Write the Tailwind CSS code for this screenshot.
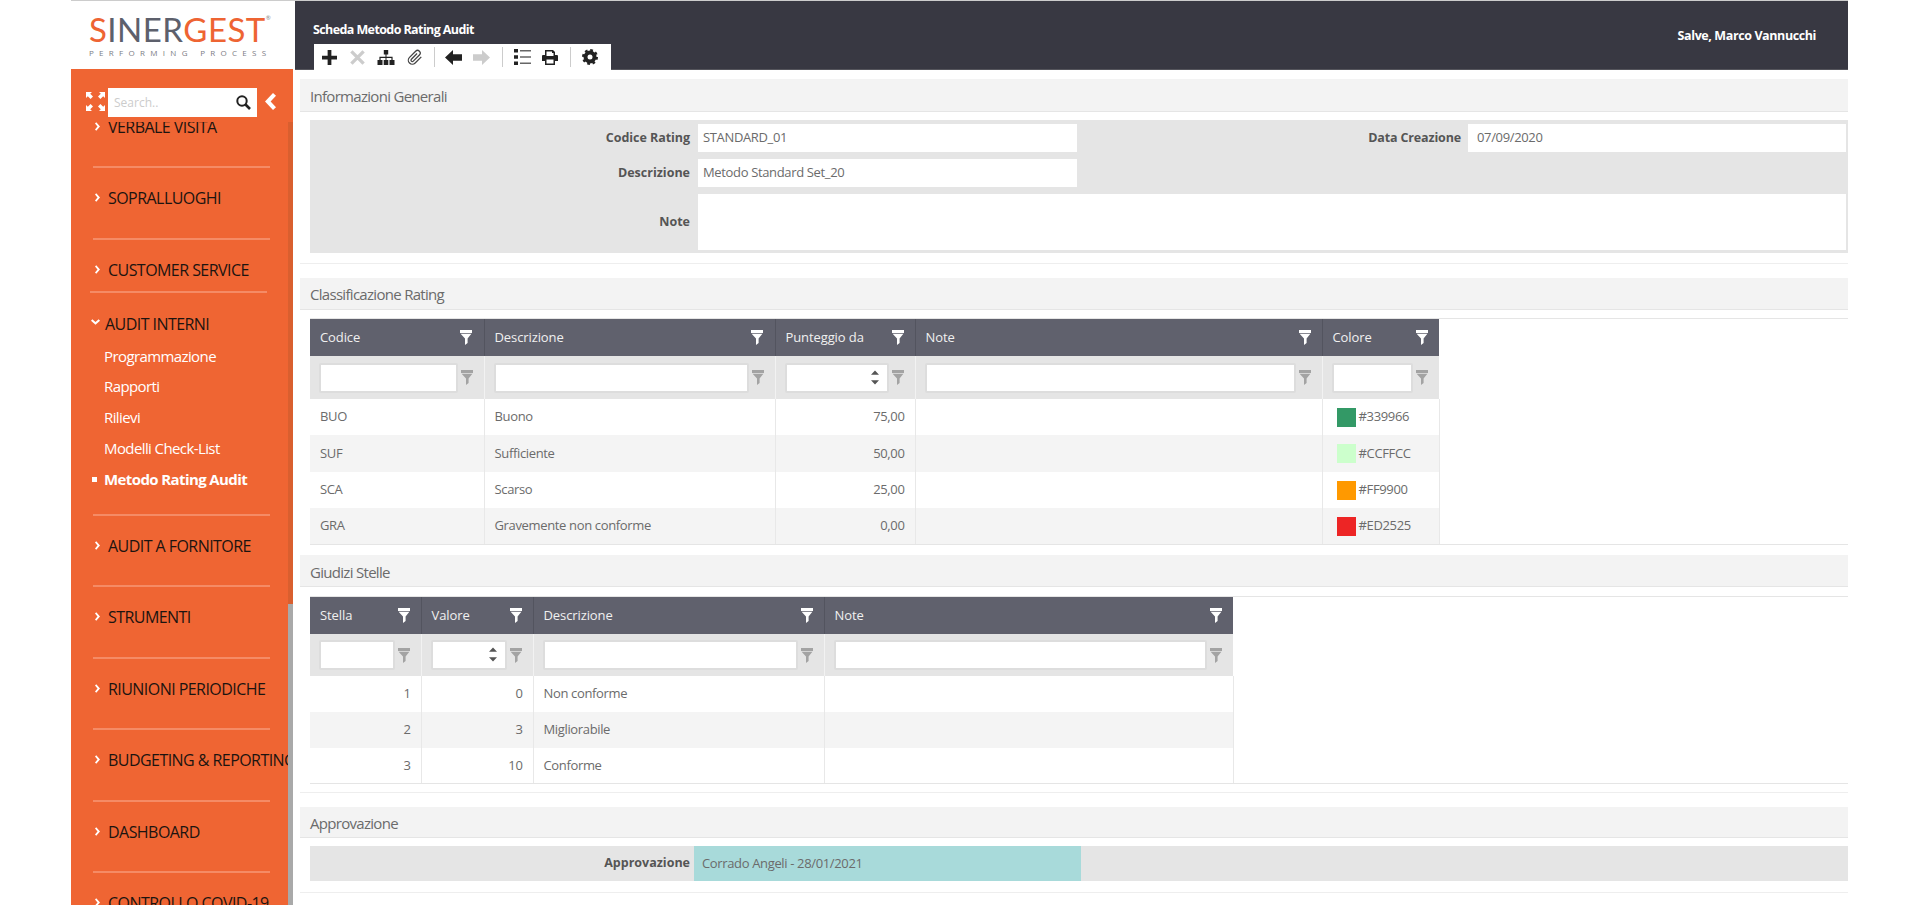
<!DOCTYPE html>
<html lang="it">
<head>
  <meta charset="UTF-8">
  <title>Scheda Metodo Rating Audit</title>
  <script src="https://cdn.jsdelivr.net/npm/@tailwindcss/browser@4"></script>
</head>
<body class="bg-white font-['Open_Sans',sans-serif] text-[#6b6b6b] h-[905px] overflow-hidden">
  <!-- shared icons -->
  <svg class="hidden">
    <symbol id="funnel" viewBox="0 0 12 15"><path d="M0 0h12v3H0zM.6 3.800h10.800L7.600 8.400V13L5 15V8.400z"/></symbol>
    <symbol id="chev" viewBox="0 0 6 10"><path d="M1.500 0 6 5l-4.500 5L0 8.500 3 5 0 1.500z"/></symbol>
    <symbol id="spin" viewBox="0 0 9 16"><path d="M4.500 0 9 5H0zM0 11h9l-4.500 5z"/></symbol>
  </svg>

  <div class="ml-[71px] w-[1777px] h-[905px] flex border-t border-[#ccc]">
    <!-- sidebar -->
    <aside class="w-[224px] shrink-0 flex flex-col">
      <div class="h-[68px] shrink-0 pl-[18px] pt-[10px] bg-white">
        <div class="flex items-start text-[33px] leading-[37px] font-['Lato',sans-serif] tracking-[0.45px] text-[#ee6433]"><span>S</span><span class="text-[#5d606c]">INER</span><span>GEST</span><span class="text-[6px] leading-[14px] text-[#888]">®</span></div>
        <div class="text-[8px] leading-[10px] tracking-[5.300px] text-[#7d7d85] whitespace-nowrap">PERFORMING PROCESS</div>
      </div>
      <div class="w-[222px] flex-1 min-h-0 bg-[#ef6533] flex flex-col">
        <div class="h-[53px] shrink-0 flex items-start pt-[19px] pl-[15px]">
          <svg class="w-[19px] h-[19px] mt-[4px] text-white" viewBox="0 0 19 19" fill="currentColor"><path d="M0 0h6L4.200 1.800 7 4.600 4.600 7 1.800 4.200 0 6zM19 0v6l-1.800-1.800L14.400 7 12 4.600l2.800-2.800L13 0zM0 19v-6l1.800 1.800L4.600 12 7 14.400l-2.800 2.800L6 19zM19 19h-6l1.800-1.800L12 14.400l2.400-2.400 2.800 2.800L19 13z"/></svg>
          <div class="w-[149px] h-[29px] ml-[3px] bg-white flex items-center justify-between pl-[6px] pr-[6px]">
            <span class="text-[12px] text-[#ccc]">Search..</span>
            <svg class="w-[15px] h-[15px] text-[#222]" viewBox="0 0 15 15" fill="none" stroke="currentColor"><circle cx="6" cy="6" r="4.700" stroke-width="2"/><path d="M9.500 9.500 14 14" stroke-width="2.600"/></svg>
          </div>
          <svg class="w-[11px] h-[17px] ml-[8px] mt-[5px] text-white" viewBox="0 0 11 17" fill="currentColor"><path d="M8 0l3 2.800L5.600 8.500 11 14.200 8 17 0 8.500z"/></svg>
        </div>
        <div class="flex-1 min-h-0 flex">
          <nav class="w-[217px] overflow-hidden text-[16px] tracking-[-0.55px] leading-[20px] text-[#1c1410] whitespace-nowrap">
            <div class="-mt-[25.500px]">
              <a class="ml-[22px] w-[177px] h-[71.500px] pt-[20px] flex border-b-2 border-[#f58b65]"><svg class="w-[5px] h-[9px] shrink-0 mt-[5px] ml-[2px] mr-[8px] fill-white"><use href="#chev"/></svg>VERBALE VISITA</a>
              <a class="ml-[22px] w-[177px] h-[71.500px] pt-[20px] flex border-b-2 border-[#f58b65]"><svg class="w-[5px] h-[9px] shrink-0 mt-[5px] ml-[2px] mr-[8px] fill-white"><use href="#chev"/></svg>SOPRALLUOGHI</a>
              <a class="ml-[19px] w-[177px] h-[53px] pt-[20px] pl-[3px] flex border-b-2 border-[#f58b65]"><svg class="w-[5px] h-[9px] shrink-0 mt-[5px] ml-[2px] mr-[8px] fill-white"><use href="#chev"/></svg>CUSTOMER SERVICE</a>
              <div class="ml-[22px] w-[177px] h-[223px] pt-[21px] border-b-2 border-[#f58b65]">
                <a class="flex"><svg class="w-[9px] h-[6px] shrink-0 mt-[5px] -ml-[2px] mr-[5px] fill-white" viewBox="0 0 10 6"><path d="M0 1.500 1.500 0 5 3l3.500-3L10 1.500 5 6z"/></svg>AUDIT INTERNI</a>
                <div class="mt-[12px] pl-[11px] text-[15px] tracking-[-0.6px] text-white flex flex-col gap-[10.800px]">
                  <a>Programmazione</a>
                  <a>Rapporti</a>
                  <a>Rilievi</a>
                  <a>Modelli Check-List</a>
                  <a class="relative font-bold"><span class="absolute -left-[12px] top-[8px] w-[5px] h-[5px] bg-white"></span>Metodo Rating Audit</a>
                </div>
              </div>
              <a class="ml-[22px] w-[177px] h-[71.500px] pt-[20px] flex border-b-2 border-[#f58b65]"><svg class="w-[5px] h-[9px] shrink-0 mt-[5px] ml-[2px] mr-[8px] fill-white"><use href="#chev"/></svg>AUDIT A FORNITORE</a>
              <a class="ml-[22px] w-[177px] h-[71.500px] pt-[20px] flex border-b-2 border-[#f58b65]"><svg class="w-[5px] h-[9px] shrink-0 mt-[5px] ml-[2px] mr-[8px] fill-white"><use href="#chev"/></svg>STRUMENTI</a>
              <a class="ml-[22px] w-[177px] h-[71.500px] pt-[20px] flex border-b-2 border-[#f58b65]"><svg class="w-[5px] h-[9px] shrink-0 mt-[5px] ml-[2px] mr-[8px] fill-white"><use href="#chev"/></svg>RIUNIONI PERIODICHE</a>
              <a class="ml-[22px] w-[177px] h-[71.500px] pt-[20px] flex border-b-2 border-[#f58b65]"><svg class="w-[5px] h-[9px] shrink-0 mt-[5px] ml-[2px] mr-[8px] fill-white"><use href="#chev"/></svg>BUDGETING &amp; REPORTING</a>
              <a class="ml-[22px] w-[177px] h-[71.500px] pt-[20px] flex border-b-2 border-[#f58b65]"><svg class="w-[5px] h-[9px] shrink-0 mt-[5px] ml-[2px] mr-[8px] fill-white"><use href="#chev"/></svg>DASHBOARD</a>
              <a class="ml-[22px] w-[177px] h-[71.500px] pt-[20px] flex"><svg class="w-[5px] h-[9px] shrink-0 mt-[5px] ml-[2px] mr-[8px] fill-white"><use href="#chev"/></svg>CONTROLLO COVID-19</a>
            </div>
          </nav>
          <div class="w-[5px] flex flex-col">
            <div class="h-[482px] bg-[#d95f2f]"></div>
            <div class="flex-1 bg-[#a9a9a9]"></div>
          </div>
        </div>
      </div>
    </aside>

    <div class="flex-1 min-w-0 flex flex-col">
      <!-- top bar -->
      <header class="h-[69px] shrink-0 bg-[#383842] border-b border-[#55555c] relative text-white font-bold">
        <div class="pl-[18px] pt-[20px] text-[12.500px] tracking-[-0.6px] leading-[17px]">Scheda Metodo Rating Audit</div>
        <div class="absolute right-[32px] top-[26px] text-[12.500px] tracking-[-0.4px] leading-[17px]">Salve, Marco Vannucchi</div>
        <div class="ml-[19px] mt-[6px] w-[297px] h-[26px] bg-white flex items-center pl-[8px] relative z-10">
          <svg class="w-[15px] h-[15px] fill-[#222]" viewBox="0 0 16 16"><path d="M6 0h4v6h6v4h-6v6H6v-6H0V6h6z"/></svg>
          <svg class="w-[15px] h-[15px] ml-[13px] stroke-[#ccc]" viewBox="0 0 16 16" stroke-width="3.600"><path d="M1.500 1.500l13 13M14.500 1.500l-13 13"/></svg>
          <svg class="w-[18px] h-[15px] ml-[12px] fill-[#222]" viewBox="0 0 18 15"><path d="M6.800 0h4.400v4.400H9.500V6.800H15.600V10H17.500V15H12.500V10H14.400V8H9.500V10H11.300V15H6.700V10H8.500V8H3.600V10H5.500V15H.5V10H2.400V6.800H8.500V4.400H6.800z"/></svg>
          <svg class="w-[16px] h-[17px] ml-[12px] stroke-[#444]" viewBox="0 0 24 24" fill="none" stroke-width="1.900"><path d="M21.440 11.050l-9.190 9.190a6 6 0 0 1-8.490-8.490l9.190-9.190a4 4 0 0 1 5.660 5.660l-9.200 9.190a2 2 0 0 1-2.830-2.830l8.490-8.480"/></svg>
          <span class="w-px h-[20px] bg-[#ccc] ml-[11px]"></span>
          <svg class="w-[17px] h-[15px] ml-[10px] fill-[#222]" viewBox="0 0 17 15"><path d="M0 7.500 8 0v4.300h9v6.400H8V15z"/></svg>
          <svg class="w-[17px] h-[15px] ml-[11px] fill-[#ccc]" viewBox="0 0 17 15"><path d="M17 7.500 9 0v4.300H0v6.400h9V15z"/></svg>
          <span class="w-px h-[20px] bg-[#ccc] ml-[12px]"></span>
          <svg class="w-[17px] h-[16px] ml-[11px]" viewBox="0 0 17 16"><path fill="#222" d="M0 0h4v3.500H0zM0 6.200h4v3.500H0zM0 12.500h4V16H0z"/><path fill="#666" d="M6 1h11v1.400H6zM6 7.300h11v1.400H6zM6 13.600h11V15H6z"/></svg>
          <svg class="w-[16px] h-[15px] ml-[11px] fill-[#222]" viewBox="0 0 16 15" fill-rule="evenodd"><path d="M3 0h8l2 2v3h2a1 1 0 0 1 1 1v5h-3v4H3v-4H0V6a1 1 0 0 1 1-1h2zm1.500 1.500V6h7V3H10V1.500zM4.500 9.500v4h7v-4z"/></svg>
          <span class="w-px h-[20px] bg-[#ccc] ml-[12px]"></span>
          <svg class="w-[16px] h-[16px] ml-[11px]" viewBox="0 0 16 16"><circle cx="8" cy="8" r="6.500" fill="#222"/><circle cx="8" cy="8" r="6.800" fill="none" stroke="#222" stroke-width="2.400" stroke-dasharray="2.700 2.640"/><circle cx="8" cy="8" r="2.500" fill="#fff"/></svg>
        </div>
      </header>

      <main class="flex-1 min-h-0 pt-[9px] pl-[5px] text-[13px] tracking-[-0.35px]">
        <!-- informazioni generali -->
        <section class="h-[185px] border-b border-[#eee]">
          <h2 class="h-[33px] pl-[10px] bg-[#f3f3f3] border-b border-[#e5e5e5] text-[15px] tracking-[-0.7px] leading-[35px]">Informazioni Generali</h2>
          <div class="ml-[10px] mt-[8px] h-[133px] bg-[#e5e5e5] pt-[4px] pr-[2px] flex flex-col">
            <div class="flex h-[28px] items-center">
              <label class="w-[388px] pr-[8px] text-right font-bold text-[#555] text-[12.500px] tracking-[-0.05px]">Codice Rating</label>
              <div class="w-[379px] h-full bg-white pl-[5px] leading-[26px]">STANDARD_01</div>
              <label class="w-[391px] pr-[7px] text-right font-bold text-[#555] text-[12.500px] tracking-[-0.15px]">Data Creazione</label>
              <div class="flex-1 h-full bg-white pl-[9px] leading-[26px]">07/09/2020</div>
            </div>
            <div class="flex h-[28px] items-center mt-[7px]">
              <label class="w-[388px] pr-[8px] text-right font-bold text-[#555] text-[12.500px] tracking-normal">Descrizione</label>
              <div class="w-[379px] h-full bg-white pl-[5px] leading-[26px]">Metodo Standard Set_20</div>
            </div>
            <div class="flex h-[56px] items-center mt-[7px]">
              <label class="w-[388px] pr-[8px] text-right font-bold text-[#555] text-[12.500px] tracking-normal">Note</label>
              <div class="flex-1 h-full bg-white"></div>
            </div>
          </div>
        </section>

        <!-- classificazione rating -->
        <section class="mt-[14px] h-[277px]">
          <h2 class="h-[32px] pl-[10px] bg-[#f3f3f3] border-b border-[#e5e5e5] text-[15px] tracking-[-0.7px] leading-[33px]">Classificazione Rating</h2>
          <div class="ml-[10px] mt-[8px] border-y border-[#e5e5e5]">
            <table class="table-fixed w-[1129px] border-collapse">
              <colgroup><col class="w-[174px]"><col class="w-[291px]"><col class="w-[140px]"><col class="w-[407px]"><col class="w-[117px]"></colgroup>
              <thead>
                <tr class="h-[37px] bg-[#60616d] text-[#f0f0f0] tracking-[-0.1px]">
                  <th class="px-[10px] font-normal text-left border-r border-[#53545f]"><div class="flex justify-between items-center"><span>Codice</span><svg class="w-[12px] h-[15px] mr-[2px] fill-white"><use href="#funnel"/></svg></div></th>
                  <th class="px-[10px] font-normal text-left border-r border-[#53545f]"><div class="flex justify-between items-center"><span>Descrizione</span><svg class="w-[12px] h-[15px] mr-[2px] fill-white"><use href="#funnel"/></svg></div></th>
                  <th class="px-[10px] font-normal text-left border-r border-[#53545f]"><div class="flex justify-between items-center"><span>Punteggio da</span><svg class="w-[12px] h-[15px] mr-[1px] fill-white"><use href="#funnel"/></svg></div></th>
                  <th class="px-[10px] font-normal text-left border-r border-[#53545f]"><div class="flex justify-between items-center"><span>Note</span><svg class="w-[12px] h-[15px] mr-[1px] fill-white"><use href="#funnel"/></svg></div></th>
                  <th class="px-[10px] font-normal text-left"><div class="flex justify-between items-center"><span>Colore</span><svg class="w-[12px] h-[15px] mr-[1px] fill-white"><use href="#funnel"/></svg></div></th>
                </tr>
              </thead>
              <tbody>
                <tr class="h-[43px] bg-[#e5e5e5]">
                  <td class="pl-[9px] pr-[11px] border-r border-[#f2f2f2]"><div class="flex items-center gap-[3px]"><input class="flex-1 min-w-0 h-[30px] bg-white border-2 border-[#ddd] rounded-[2px]"><svg class="w-[12px] h-[15px] shrink-0 fill-[#a3a3a3]"><use href="#funnel"/></svg></div></td>
                  <td class="pl-[9px] pr-[11px] border-r border-[#f2f2f2]"><div class="flex items-center gap-[3px]"><input class="flex-1 min-w-0 h-[30px] bg-white border-2 border-[#ddd] rounded-[2px]"><svg class="w-[12px] h-[15px] shrink-0 fill-[#a3a3a3]"><use href="#funnel"/></svg></div></td>
                  <td class="pl-[9px] pr-[11px] border-r border-[#f2f2f2]"><div class="flex items-center gap-[3px]"><div class="relative flex-1 min-w-0 h-[30px] bg-white border-2 border-[#ddd] rounded-[2px]"><svg class="absolute right-[8px] top-[4px] w-[8px] h-[17px] fill-[#555]"><use href="#spin"/></svg></div><svg class="w-[12px] h-[15px] shrink-0 fill-[#a3a3a3]"><use href="#funnel"/></svg></div></td>
                  <td class="pl-[9px] pr-[11px] border-r border-[#f2f2f2]"><div class="flex items-center gap-[3px]"><input class="flex-1 min-w-0 h-[30px] bg-white border-2 border-[#ddd] rounded-[2px]"><svg class="w-[12px] h-[15px] shrink-0 fill-[#a3a3a3]"><use href="#funnel"/></svg></div></td>
                  <td class="pl-[9px] pr-[11px]"><div class="flex items-center gap-[3px]"><input class="flex-1 min-w-0 h-[30px] bg-white border-2 border-[#ddd] rounded-[2px]"><svg class="w-[12px] h-[15px] shrink-0 fill-[#a3a3a3]"><use href="#funnel"/></svg></div></td>
                </tr>
                <tr class="h-[36px]">
                  <td class="px-[10px] border-r border-[#e8e8e8]">BUO</td><td class="px-[10px] border-r border-[#e8e8e8]">Buono</td><td class="px-[10px] text-right border-r border-[#e8e8e8]">75,00</td><td class="border-r border-[#e8e8e8]"></td>
                  <td class="pl-[14px] border-r border-[#e8e8e8]"><div class="flex items-center gap-[3px]"><span class="w-[19px] h-[19px] bg-[#339966]"></span>#339966</div></td>
                </tr>
                <tr class="h-[37px] bg-[#f4f4f4]">
                  <td class="px-[10px] border-r border-[#e8e8e8]">SUF</td><td class="px-[10px] border-r border-[#e8e8e8]">Sufficiente</td><td class="px-[10px] text-right border-r border-[#e8e8e8]">50,00</td><td class="border-r border-[#e8e8e8]"></td>
                  <td class="pl-[14px] border-r border-[#e8e8e8]"><div class="flex items-center gap-[3px]"><span class="w-[19px] h-[19px] bg-[#ccffcc]"></span>#CCFFCC</div></td>
                </tr>
                <tr class="h-[36px]">
                  <td class="px-[10px] border-r border-[#e8e8e8]">SCA</td><td class="px-[10px] border-r border-[#e8e8e8]">Scarso</td><td class="px-[10px] text-right border-r border-[#e8e8e8]">25,00</td><td class="border-r border-[#e8e8e8]"></td>
                  <td class="pl-[14px] border-r border-[#e8e8e8]"><div class="flex items-center gap-[3px]"><span class="w-[19px] h-[19px] bg-[#ff9900]"></span>#FF9900</div></td>
                </tr>
                <tr class="h-[36px] bg-[#f4f4f4]">
                  <td class="px-[10px] border-r border-[#e8e8e8]">GRA</td><td class="px-[10px] border-r border-[#e8e8e8]">Gravemente non conforme</td><td class="px-[10px] text-right border-r border-[#e8e8e8]">0,00</td><td class="border-r border-[#e8e8e8]"></td>
                  <td class="pl-[14px] border-r border-[#e8e8e8]"><div class="flex items-center gap-[3px]"><span class="w-[19px] h-[19px] bg-[#ed2525]"></span>#ED2525</div></td>
                </tr>
              </tbody>
            </table>
          </div>
        </section>

        <!-- giudizi stelle -->
        <section class="h-[238px] border-b border-[#eee]">
          <h2 class="h-[32px] pl-[10px] bg-[#f3f3f3] border-b border-[#e5e5e5] text-[15px] tracking-[-0.7px] leading-[35px]">Giudizi Stelle</h2>
          <div class="ml-[10px] mt-[9px] border-y border-[#e5e5e5]">
            <table class="table-fixed w-[923px] border-collapse">
              <colgroup><col class="w-[111px]"><col class="w-[112px]"><col class="w-[291px]"><col class="w-[409px]"></colgroup>
              <thead>
                <tr class="h-[37px] bg-[#60616d] text-[#f0f0f0] tracking-[-0.1px]">
                  <th class="px-[10px] font-normal text-left border-r border-[#53545f]"><div class="flex justify-between items-center"><span>Stella</span><svg class="w-[12px] h-[15px] mr-[1px] fill-white"><use href="#funnel"/></svg></div></th>
                  <th class="px-[10px] font-normal text-left border-r border-[#53545f]"><div class="flex justify-between items-center"><span>Valore</span><svg class="w-[12px] h-[15px] mr-[1px] fill-white"><use href="#funnel"/></svg></div></th>
                  <th class="px-[10px] font-normal text-left border-r border-[#53545f]"><div class="flex justify-between items-center"><span>Descrizione</span><svg class="w-[12px] h-[15px] mr-[1px] fill-white"><use href="#funnel"/></svg></div></th>
                  <th class="px-[10px] font-normal text-left"><div class="flex justify-between items-center"><span>Note</span><svg class="w-[12px] h-[15px] mr-[1px] fill-white"><use href="#funnel"/></svg></div></th>
                </tr>
              </thead>
              <tbody>
                <tr class="h-[42px] bg-[#e5e5e5]">
                  <td class="pl-[9px] pr-[11px] border-r border-[#f2f2f2]"><div class="flex items-center gap-[3px]"><input class="flex-1 min-w-0 h-[30px] bg-white border-2 border-[#ddd] rounded-[2px]"><svg class="w-[12px] h-[15px] shrink-0 fill-[#a3a3a3]"><use href="#funnel"/></svg></div></td>
                  <td class="pl-[9px] pr-[11px] border-r border-[#f2f2f2]"><div class="flex items-center gap-[3px]"><div class="relative flex-1 min-w-0 h-[30px] bg-white border-2 border-[#ddd] rounded-[2px]"><svg class="absolute right-[8px] top-[4px] w-[8px] h-[17px] fill-[#555]"><use href="#spin"/></svg></div><svg class="w-[12px] h-[15px] shrink-0 fill-[#a3a3a3]"><use href="#funnel"/></svg></div></td>
                  <td class="pl-[9px] pr-[11px] border-r border-[#f2f2f2]"><div class="flex items-center gap-[3px]"><input class="flex-1 min-w-0 h-[30px] bg-white border-2 border-[#ddd] rounded-[2px]"><svg class="w-[12px] h-[15px] shrink-0 fill-[#a3a3a3]"><use href="#funnel"/></svg></div></td>
                  <td class="pl-[9px] pr-[11px]"><div class="flex items-center gap-[3px]"><input class="flex-1 min-w-0 h-[30px] bg-white border-2 border-[#ddd] rounded-[2px]"><svg class="w-[12px] h-[15px] shrink-0 fill-[#a3a3a3]"><use href="#funnel"/></svg></div></td>
                </tr>
                <tr class="h-[36px]"><td class="px-[10px] text-right border-r border-[#e8e8e8]">1</td><td class="px-[10px] text-right border-r border-[#e8e8e8]">0</td><td class="px-[10px] border-r border-[#e8e8e8]">Non conforme</td><td class="border-r border-[#e8e8e8]"></td></tr>
                <tr class="h-[36px] bg-[#f4f4f4]"><td class="px-[10px] text-right border-r border-[#e8e8e8]">2</td><td class="px-[10px] text-right border-r border-[#e8e8e8]">3</td><td class="px-[10px] border-r border-[#e8e8e8]">Migliorabile</td><td class="border-r border-[#e8e8e8]"></td></tr>
                <tr class="h-[35px]"><td class="px-[10px] text-right border-r border-[#e8e8e8]">3</td><td class="px-[10px] text-right border-r border-[#e8e8e8]">10</td><td class="px-[10px] border-r border-[#e8e8e8]">Conforme</td><td class="border-r border-[#e8e8e8]"></td></tr>
              </tbody>
            </table>
          </div>
        </section>

        <!-- approvazione -->
        <section class="mt-[14px] h-[86px] border-b border-[#eee]">
          <h2 class="h-[31px] pl-[10px] bg-[#f3f3f3] border-b border-[#e5e5e5] text-[15px] tracking-[-0.7px] leading-[33px]">Approvazione</h2>
          <div class="ml-[10px] mt-[8px] h-[35px] bg-[#e5e5e5] flex items-center">
            <label class="w-[384px] pr-[4px] text-right font-bold text-[#555] text-[12.500px] tracking-normal">Approvazione</label>
            <div class="w-[387px] h-full bg-[#a8dada] pl-[8px] leading-[35px]">Corrado Angeli - 28/01/2021</div>
          </div>
        </section>
      </main>
    </div>
  </div>
</body>
</html>
